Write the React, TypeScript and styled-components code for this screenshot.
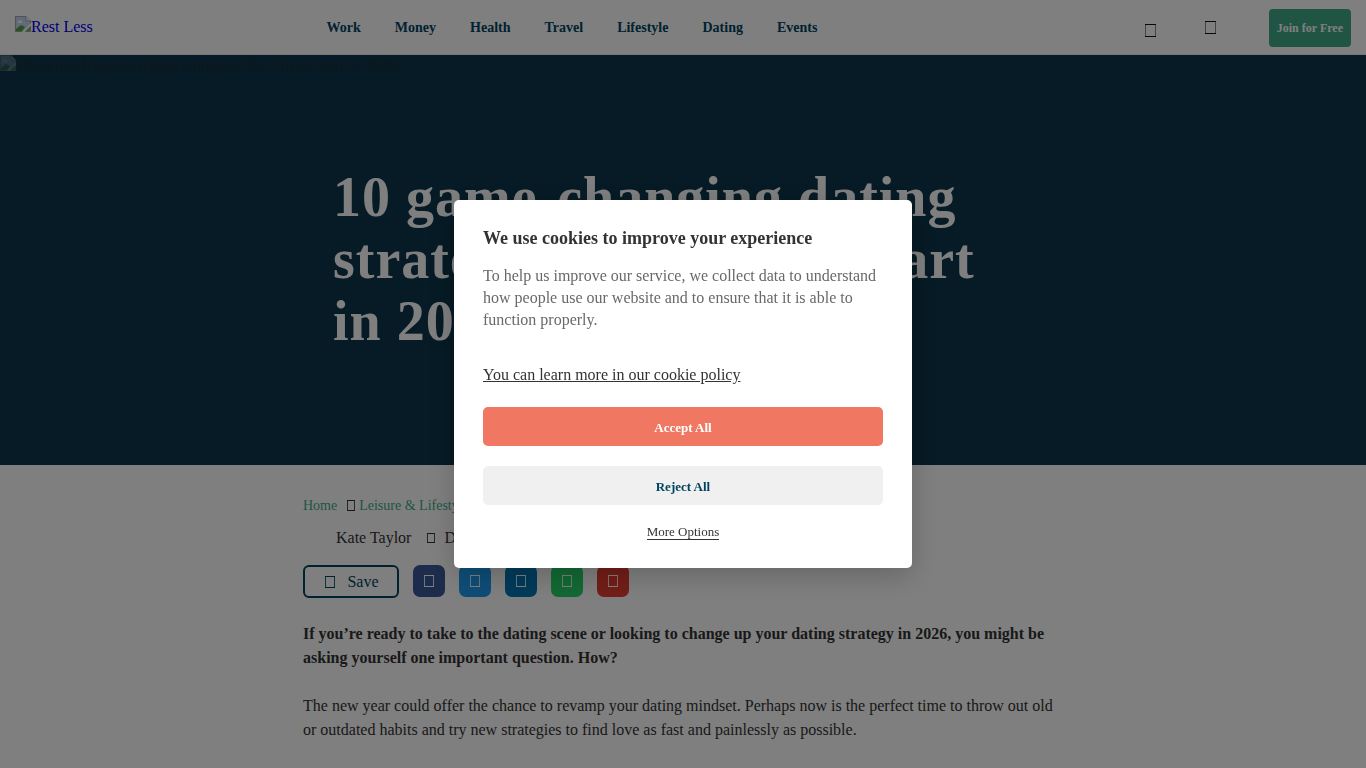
import React from 'react';
import styled, { createGlobalStyle } from 'styled-components';

const Global = createGlobalStyle`
  * { box-sizing: border-box; }
  body {
    margin: 0;
    background: #fff;
    color: #333;
    font-family: "Liberation Serif", "Times New Roman", serif;
    font-size: 16px;
    overflow: hidden;
  }
  h1, h2, p { margin: 0; padding: 0; }
  button { font-family: inherit; cursor: pointer; }
`;

const Header = styled.header`
  display: grid;
  grid-template-columns: 1fr auto 1fr;
  align-items: center;
  height: 55px;
  padding: 2px 15px 0;
  border-bottom: 1px solid #efefef;
`;

const LogoLink = styled.a`
  justify-self: start;
  padding-bottom: 4px;
  color: #0000ee;
  line-height: 18px;
  text-decoration: none;
`;

const Nav = styled.nav`
  display: flex;
  gap: 34px;
  padding-right: 222px;
`;

const NavLink = styled.a`
  color: #004460;
  font-size: 14px;
  font-weight: 700;
  line-height: 16px;
  text-decoration: none;
`;

const Actions = styled.div`
  display: flex;
  align-items: center;
  justify-content: flex-end;
  gap: 49px;
`;

const IconButton = styled.button<{ $low?: boolean }>`
  display: flex;
  padding: ${p => (p.$low ? '6px' : '0')} 0 2px;
  border: 0;
  background: none;
  color: #111;
`;

const JoinButton = styled.button`
  height: 38px;
  margin-left: 4px;
  padding: 0 8px;
  border: 0;
  border-radius: 4px;
  background: #41aa87;
  color: #fff;
  font-size: 12px;
  font-weight: 700;
  white-space: nowrap;
`;

const Hero = styled.section`
  display: flex;
  flex-direction: column;
  height: 410px;
  background: #0c364a;
`;

const HeroImage = styled.div`
  height: 18px;
  color: #1c2f39;
  line-height: 18px;
  white-space: nowrap;

  svg { opacity: 0.35; }
`;

const HeroTitle = styled.h1`
  width: 100%;
  max-width: 700px;
  margin: 93px auto 0;
  color: #fff;
  font-size: 56px;
  font-weight: 700;
  letter-spacing: 1px;
  line-height: 62px;
`;

const Article = styled.main`
  max-width: 760px;
  margin: 0 auto;
  padding-top: 32px;
`;

const Breadcrumbs = styled.nav`
  display: flex;
  align-items: center;
  height: 18px;
  font-size: 14px;
  white-space: nowrap;
`;

const Crumb = styled.a`
  color: #41aa87;
  text-decoration: none;
`;

const CrumbIcon = styled.span`
  display: flex;
  padding: 0 4px 2px 10px;
`;

const Byline = styled.div`
  display: flex;
  align-items: center;
  gap: 16px;
  height: 18px;
  margin-top: 14px;
  padding-left: 33px;
`;

const DateText = styled.span`
  display: flex;
  align-items: center;
  gap: 9px;
  white-space: nowrap;
`;

const ShareRow = styled.div`
  display: flex;
  gap: 14px;
  margin-top: 18px;
`;

const SaveButton = styled.button`
  display: flex;
  align-items: center;
  justify-content: center;
  gap: 12px;
  width: 96px;
  height: 33px;
  padding: 0 0 0 2px;
  border: 2px solid #004460;
  border-radius: 6px;
  background: none;
  color: #004460;
  font-size: 16px;
`;

const ShareButton = styled.button<{ $color: string }>`
  display: flex;
  align-items: center;
  justify-content: center;
  width: 32px;
  height: 32px;
  padding: 0;
  border: 0;
  border-radius: 7px;
  background: ${p => p.$color};
  color: #fff;
`;

const Paragraph = styled.p<{ $lead?: boolean }>`
  margin-top: 24px;
  font-weight: ${p => (p.$lead ? 700 : 400)};
  line-height: 24px;
`;

const Backdrop = styled.div`
  position: fixed;
  inset: 0;
  display: flex;
  align-items: center;
  justify-content: center;
  background: rgba(0, 0, 0, 0.5);
`;

const Dialog = styled.section`
  display: flex;
  flex-direction: column;
  width: 458px;
  padding: 27px 29px 28px;
  border-radius: 5px;
  background: #fff;
  box-shadow: 0 8px 28px rgba(0, 0, 0, 0.2);
`;

const DialogTitle = styled.h2`
  font-size: 18px;
  line-height: 22px;
`;

const DialogText = styled.p`
  margin-top: 16px;
  color: #696969;
  line-height: 22px;
`;

const PolicyLink = styled.a`
  align-self: flex-start;
  margin-top: 33px;
  padding-bottom: 1px;
  color: #333;
  line-height: 22px;
`;

const ChoiceButton = styled.button<{ $primary?: boolean }>`
  height: 39px;
  margin-top: 20px;
  padding: 2px 0 0;
  border: 0;
  border-radius: 5px;
  background: ${p => (p.$primary ? '#f07863' : '#f0f0f0')};
  color: ${p => (p.$primary ? '#fff' : '#004460')};
  font-size: 13px;
  font-weight: 700;
`;

const MoreButton = styled.button`
  align-self: center;
  margin-top: 20px;
  padding: 0;
  border: 0;
  border-bottom: 1px solid #333;
  background: none;
  color: #333;
  font-size: 13px;
  line-height: 14px;
`;

interface GlyphProps {
  width: number;
  height: number;
  sides?: number;
}

const Glyph = ({ width, height, sides = 0.85 }: GlyphProps) => (
  <svg width={width} height={height} aria-hidden="true">
    <path d={`M.5 1V${height - 1}M${width - 0.5} 1V${height - 1}`} stroke="currentColor" strokeOpacity={sides} />
    <path d={`M0 .5H${width}M0 ${height - 0.5}H${width}`} stroke="currentColor" />
  </svg>
);

const MissingImage = () => (
  <svg width="16" height="16" viewBox="0 0 16 16" aria-hidden="true">
    <path d="M.5 .5H11L15.500 5V15.500H.5Z" fill="#c5d5f5" stroke="#a3a3a3" />
    <path d="M11 .5V5H15.500" fill="#fff" stroke="#a3a3a3" />
    <path d="M3 6.500C3 4 6 4 6.500 5.500C8 5.500 8 7 7 7H3Z" fill="#fff" />
    <path d="M1 15V13L6 9L10 11L7 15Z" fill="#4ca436" />
    <path d="M7 16L16 7V10L10 16Z" fill="#fff" />
    <path d="M10 15.500L15.500 10V15.500Z" fill="#7dae70" />
  </svg>
);

const topics = ['Work', 'Money', 'Health', 'Travel', 'Lifestyle', 'Dating', 'Events'];

const title = '10 game-changing dating strategies for a fresh start in 2026';

const networks = [
  { name: 'Facebook', color: '#3b5998' },
  { name: 'Twitter', color: '#1d9bf0' },
  { name: 'LinkedIn', color: '#0077b5' },
  { name: 'WhatsApp', color: '#25d366' },
  { name: 'Email', color: '#e63b31' },
];

export default function App() {
  return (
    <>
      <Global />
      <Header>
        <LogoLink href="#"><MissingImage />Rest Less</LogoLink>
        <Nav aria-label="Topics">
          {topics.map(topic => <NavLink href="#" key={topic}>{topic}</NavLink>)}
        </Nav>
        <Actions>
          <IconButton $low aria-label="Search"><Glyph width={11} height={13} sides={0.5} /></IconButton>
          <IconButton aria-label="Account"><Glyph width={11} height={13} sides={0.5} /></IconButton>
          <JoinButton>Join for Free</JoinButton>
        </Actions>
      </Header>
      <Hero>
        <HeroImage><MissingImage />{title}</HeroImage>
        <HeroTitle>{title}</HeroTitle>
      </Hero>
      <Article>
        <Breadcrumbs aria-label="Breadcrumb">
          <Crumb href="#">Home</Crumb>
          <CrumbIcon><Glyph width={8} height={11} /></CrumbIcon>
          <Crumb href="#">Leisure &amp; Lifestyle</Crumb>
        </Breadcrumbs>
        <Byline>
          <span>Kate Taylor</span>
          <DateText><Glyph width={8} height={10} />D</DateText>
        </Byline>
        <ShareRow>
          <SaveButton><Glyph width={10} height={12} />Save</SaveButton>
          {networks.map(n => (
            <ShareButton key={n.name} $color={n.color} aria-label={n.name}><Glyph width={10} height={12} /></ShareButton>
          ))}
        </ShareRow>
        <Paragraph $lead>
          If you’re ready to take to the dating scene or looking to change up your dating strategy in 2026, you might be asking yourself one important question. How?
        </Paragraph>
        <Paragraph>
          The new year could offer the chance to revamp your dating mindset. Perhaps now is the perfect time to throw out old or outdated habits and try new strategies to find love as fast and painlessly as possible.
        </Paragraph>
      </Article>
      <Backdrop>
        <Dialog role="dialog" aria-modal="true" aria-labelledby="cookie-title">
          <DialogTitle id="cookie-title">We use cookies to improve your experience</DialogTitle>
          <DialogText>
            To help us improve our service, we collect data to understand how people use our website and to ensure that it is able to function properly.
          </DialogText>
          <PolicyLink href="#">You can learn more in our cookie policy</PolicyLink>
          <ChoiceButton $primary>Accept All</ChoiceButton>
          <ChoiceButton>Reject All</ChoiceButton>
          <MoreButton>More Options</MoreButton>
        </Dialog>
      </Backdrop>
    </>
  );
}
